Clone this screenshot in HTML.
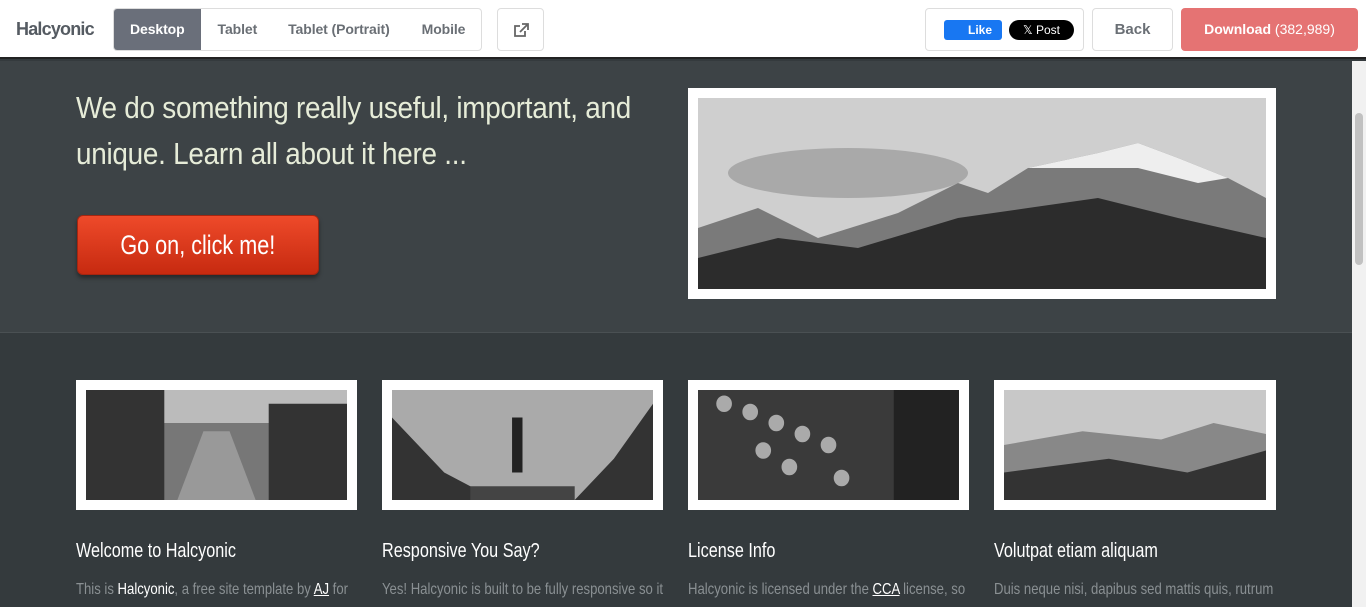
<!DOCTYPE html>
<html><head><meta charset="utf-8"><style>
*{box-sizing:border-box;margin:0;padding:0}
body{width:1366px;height:607px;overflow:hidden;font-family:"Liberation Sans",sans-serif;background:#343a3d;position:relative}
.top{position:absolute;left:0;top:0;width:1366px;height:59px;background:#fff;border-bottom:2px solid #222}
.logo{position:absolute;left:16px;top:19px;font-size:18px;color:#555b62;font-weight:bold;letter-spacing:-.8px}
.seg{position:absolute;left:113px;top:8px;height:43px;border:1px solid #ddd;border-radius:4px;display:flex;overflow:hidden}
.seg div{padding:0 16px;line-height:41px;font-size:14px;font-weight:bold;color:#6a6f75;letter-spacing:-.1px}
.seg div:nth-child(2){padding:0 15px 0 17px}
.seg .on{background:#6a6f7a;color:#fff}
.ext{position:absolute;left:497px;top:8px;width:47px;height:43px;border:1px solid #ddd;border-radius:4px}
.soc{position:absolute;left:925px;top:8px;width:159px;height:43px;border:1px solid #ddd;border-radius:4px}
.fb{position:absolute;left:18px;top:11px;width:58px;height:20px;background:#1877f2;border-radius:3px;color:#fff;font-size:12px;font-weight:bold;line-height:20px;padding-left:24px}
.xp{position:absolute;left:83px;top:11px;width:65px;height:20px;background:#000;border-radius:10px;color:#fff;font-size:12px;line-height:20px;text-align:center}
.back{position:absolute;left:1092px;top:8px;width:81px;height:43px;border:1px solid #ddd;border-radius:4px;font-size:15px;font-weight:bold;color:#6a6f75;text-align:center;line-height:41px}
.dl{position:absolute;left:1181px;top:8px;width:177px;height:43px;background:#e57373;border-radius:4px;color:#fff;font-size:14px;text-align:center;line-height:43px}
.hero{position:absolute;left:0;top:61px;width:1352px;height:272px;background:#3d4346;border-bottom:1px solid #4a5053}
.sb{position:absolute;left:1352px;top:61px;width:14px;height:546px;background:#f1f1f1}
.sb i{position:absolute;left:3px;top:52px;width:8px;height:152px;background:#c1c1c1;border-radius:4px}
h1{position:absolute;left:76px;top:85px;font-weight:normal;font-size:31px;line-height:46px;color:#e6ecd8;transform:scaleX(.9);transform-origin:left;width:660px;letter-spacing:-.3px}
.btn{position:absolute;left:77px;top:215px;width:242px;height:60px;border-radius:6px;background:linear-gradient(#ee4a2a,#c72a10);border:1px solid #a52510;box-shadow:0 3px 4px rgba(0,0,0,.4);color:#fff;font-size:27px;text-align:center;line-height:58px}
.btn span{display:inline-block;transform:scaleX(.8)}
.frame{position:absolute;background:#fff;padding:10px}
.pic{width:100%;height:100%}
h3{position:absolute;top:540px;font-weight:normal;font-size:20px;color:#fff;transform:scaleX(.81);transform-origin:left;white-space:nowrap}
p{position:absolute;top:581px;font-size:16px;color:#8a9093;transform:scaleX(.82);transform-origin:left;white-space:nowrap}
p b{font-weight:normal;color:#fff}p u{color:#fff}
</style></head><body>
<div class="top">
<div class="logo">Halcyonic</div>
<div class="seg"><div class="on">Desktop</div><div>Tablet</div><div>Tablet (Portrait)</div><div>Mobile</div></div>
<div class="ext"><svg width="47" height="43" viewBox="0 0 47 43"><path d="M27 22v5h-10v-10h5M24 15h6v6M30 15l-8 8" fill="none" stroke="#666" stroke-width="1.8"/></svg></div>
<div class="soc"><div class="fb">Like</div><div class="xp">𝕏 Post</div></div>
<div class="back">Back</div>
<div class="dl"><b>Download</b> (382,989)</div>
</div>
<div class="hero"></div>
<h1>We do something really useful, important, and unique. Learn all about it here ...</h1>
<div class="btn"><span>Go on, click me!</span></div>
<div class="frame" style="left:688px;top:88px;width:588px;height:211px"><svg class="pic" viewBox="0 0 568 191" preserveAspectRatio="none"><rect width="568" height="191" fill="#cfcfcf"/><ellipse cx="150" cy="75" rx="120" ry="25" fill="#a9a9a9"/><path d="M0 130L60 110 120 140 200 115 260 85 290 95 330 70 400 55 440 45 480 60 530 80 568 100V191H0Z" fill="#7a7a7a"/><path d="M0 160L80 140 160 150 260 120 330 110 400 100 480 120 568 140V191H0Z" fill="#2c2c2c"/><path d="M330 70L400 55 440 45 480 60 530 80 500 85 440 70Z" fill="#eee"/></svg></div>
<div class="frame" style="left:76px;top:380px;width:281px;height:130px"><svg class="pic" viewBox="0 0 100 40" preserveAspectRatio="none"><rect width="100" height="40" fill="#777"/><rect width="100" height="12" fill="#bbb"/><path d="M0 0h30v40H0zM70 5h30v35H70z" fill="#333"/><path d="M35 40L45 15h10l10 25z" fill="#999"/></svg></div>
<div class="frame" style="left:382px;top:380px;width:281px;height:130px"><svg class="pic" viewBox="0 0 100 40" preserveAspectRatio="none"><rect width="100" height="40" fill="#aaa"/><path d="M0 10L20 30 40 40H0zM100 5L85 25 70 40h30z" fill="#333"/><path d="M46 10h4v20h-4z" fill="#222"/><path d="M30 40h40v-5H30z" fill="#444"/></svg></div>
<div class="frame" style="left:688px;top:380px;width:281px;height:130px"><svg class="pic" viewBox="0 0 100 40" preserveAspectRatio="none"><rect width="100" height="40" fill="#3a3a3a"/><g fill="#aaa"><circle cx="10" cy="5" r="3"/><circle cx="20" cy="8" r="3"/><circle cx="30" cy="12" r="3"/><circle cx="40" cy="16" r="3"/><circle cx="50" cy="20" r="3"/><circle cx="25" cy="22" r="3"/><circle cx="35" cy="28" r="3"/><circle cx="55" cy="32" r="3"/></g><rect x="75" width="25" height="40" fill="#222"/></svg></div>
<div class="frame" style="left:994px;top:380px;width:282px;height:130px"><svg class="pic" viewBox="0 0 100 40" preserveAspectRatio="none"><rect width="100" height="40" fill="#c8c8c8"/><path d="M0 20L30 15 60 18 80 12 100 16V40H0z" fill="#888"/><path d="M0 30L40 25 70 30 100 22V40H0z" fill="#333"/></svg></div>
<h3 style="left:76px">Welcome to Halcyonic</h3>
<h3 style="left:382px">Responsive You Say?</h3>
<h3 style="left:688px">License Info</h3>
<h3 style="left:994px">Volutpat etiam aliquam</h3>
<p style="left:76px">This is <b>Halcyonic</b>, a free site template by <u>AJ</u> for</p>
<p style="left:382px">Yes! Halcyonic is built to be fully responsive so it</p>
<p style="left:688px">Halcyonic is licensed under the <u>CCA</u> license, so</p>
<p style="left:994px">Duis neque nisi, dapibus sed mattis quis, rutrum</p>
<div class="sb"><i></i></div>
</body></html>
